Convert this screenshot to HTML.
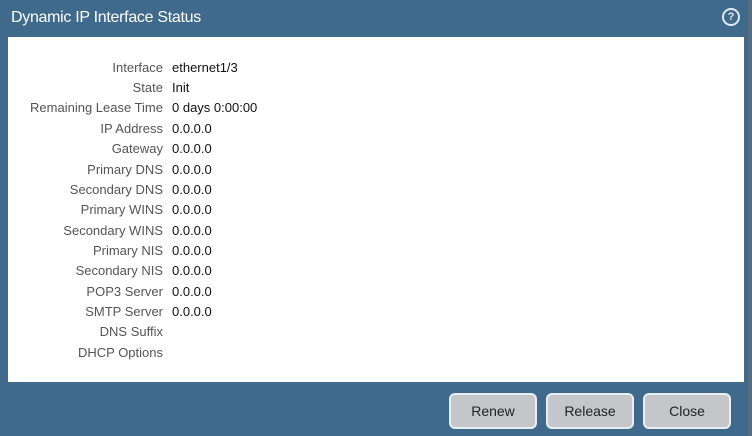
<!DOCTYPE html>
<html><head><style>
body{margin:0;width:752px;height:436px;background:#3f6a8c;font-family:"Liberation Sans",sans-serif;position:relative;overflow:hidden}
.title{position:absolute;left:11px;top:9px;color:#fff;font-size:16px;letter-spacing:-0.3px}
.help{position:absolute;left:722px;top:8px;width:14px;height:14px;border-radius:50%;border:2px solid #dfe8f0;color:#dfe8f0;font-size:11px;font-weight:bold;text-align:center;line-height:14px}
.panel{position:absolute;left:8px;top:37px;width:736px;height:345px;background:#fff}
.edge{position:absolute;left:748px;top:0;width:4px;height:436px;background:#566d80}
.row{position:absolute;left:0;width:400px;font-size:13px;height:18px;line-height:18px}
.row .l{position:absolute;right:237px;color:#555;white-space:nowrap}
.row .v{position:absolute;left:172px;color:#111;white-space:nowrap}
.btn{position:absolute;top:393px;width:84px;height:32px;background:#c4c6c9;border:2px solid #e9eef2;border-radius:6px;font-size:14px;color:#222;text-align:center;line-height:32px}
</style></head><body>
<div class="title">Dynamic IP Interface Status</div>
<div class="help">?</div>
<div class="edge"></div>
<div class="panel"></div>
<div class="row" style="top:59px"><span class="l">Interface</span><span class="v">ethernet1/3</span></div>
<div class="row" style="top:79px"><span class="l">State</span><span class="v">Init</span></div>
<div class="row" style="top:99px"><span class="l">Remaining Lease Time</span><span class="v">0 days 0:00:00</span></div>
<div class="row" style="top:120px"><span class="l">IP Address</span><span class="v">0.0.0.0</span></div>
<div class="row" style="top:140px"><span class="l">Gateway</span><span class="v">0.0.0.0</span></div>
<div class="row" style="top:161px"><span class="l">Primary DNS</span><span class="v">0.0.0.0</span></div>
<div class="row" style="top:181px"><span class="l">Secondary DNS</span><span class="v">0.0.0.0</span></div>
<div class="row" style="top:201px"><span class="l">Primary WINS</span><span class="v">0.0.0.0</span></div>
<div class="row" style="top:222px"><span class="l">Secondary WINS</span><span class="v">0.0.0.0</span></div>
<div class="row" style="top:242px"><span class="l">Primary NIS</span><span class="v">0.0.0.0</span></div>
<div class="row" style="top:262px"><span class="l">Secondary NIS</span><span class="v">0.0.0.0</span></div>
<div class="row" style="top:283px"><span class="l">POP3 Server</span><span class="v">0.0.0.0</span></div>
<div class="row" style="top:303px"><span class="l">SMTP Server</span><span class="v">0.0.0.0</span></div>
<div class="row" style="top:323px"><span class="l">DNS Suffix</span></div>
<div class="row" style="top:344px"><span class="l">DHCP Options</span></div>
<div class="btn" style="left:449px">Renew</div>
<div class="btn" style="left:546px">Release</div>
<div class="btn" style="left:643px">Close</div>
</body></html>
